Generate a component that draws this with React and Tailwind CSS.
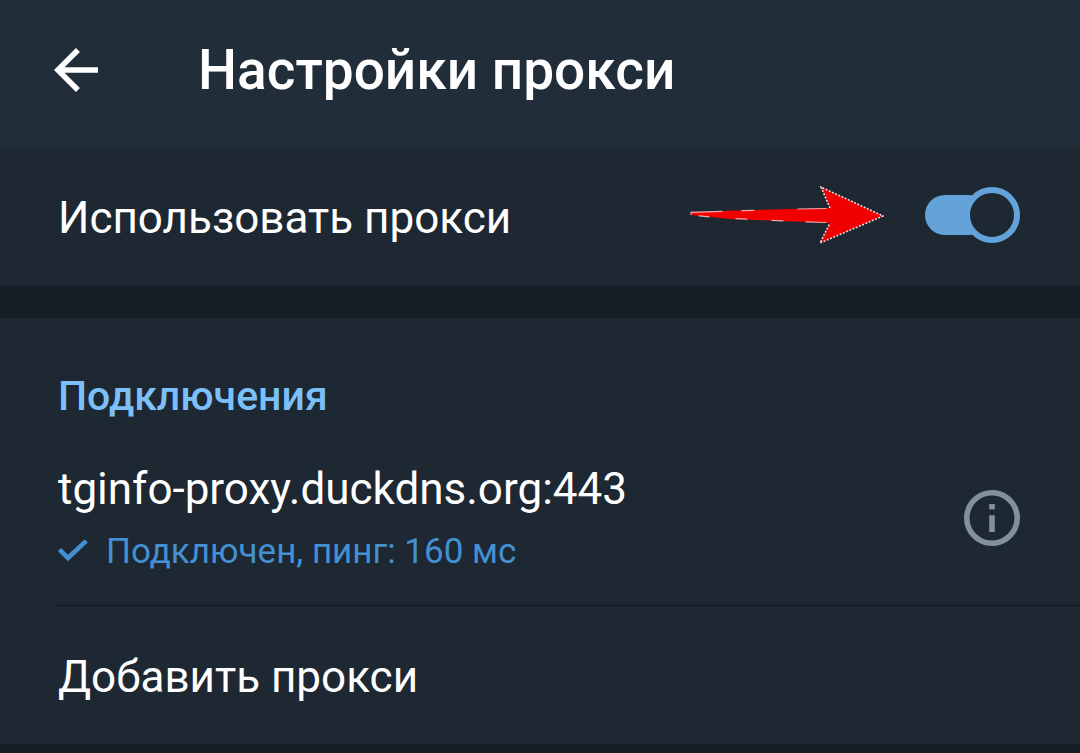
import React, { useState } from 'react';

const BackIcon = () => (
  <svg viewBox="4 4 16 16" className="w-11 h-11" fill="currentColor" aria-hidden="true">
    <path d="M20 11H7.83l5.59-5.59L12 4l-8 8 8 8 1.41-1.41L7.83 13H20v-2z" />
  </svg>
);

const InfoIcon = () => (
  <svg viewBox="2 2 20 20" className="w-14 h-14" fill="currentColor" aria-hidden="true">
    <path d="M11 7h2v2h-2V7zm0 4h2v6h-2v-6zm1-9C6.48 2 2 6.48 2 12s4.48 10 10 10 10-4.48 10-10S17.52 2 12 2zm0 18c-4.41 0-8-3.59-8-8s3.59-8 8-8 8 3.59 8 8-3.59 8-8 8z" />
  </svg>
);

const CheckIcon = () => (
  <svg viewBox="0 0 30 24" className="w-[30px] h-6 shrink-0" fill="none" stroke="currentColor" strokeWidth="4.6" aria-hidden="true">
    <path d="M1.5 9.6 L10 18 L28.3 0.8" />
  </svg>
);

// red pointer with a dotted white edge on the head
const RedArrow = () => (
  <svg viewBox="0 0 194 58" className="w-[194px] h-[58px] shrink-0" aria-hidden="true">
    <path d="M1 26 L60 24 L140 22 L131 1 L193 30 L130 57 L140 37 L90 35 L40 33 L1 29 Z" fill="#f00000" />
    <g fill="none" stroke="#f6c4c6" strokeWidth="1.2" strokeLinecap="round" opacity="0.85">
      <path d="M1 28.5 V26.3 L32 25.4 M52 24.6 L64 24.3 M108 23 L136 22.5" />
      <path d="M9 29.8 L19 30.8 M46 32.6 L57 33.2 M82 34.4 L93 34.8 M116 35.8 L136 36.5" />
    </g>
    <path d="M140 22 L131 1 L193 30 L130 57 L140 37" fill="none" stroke="#e9dcdf" strokeWidth="1.6" strokeDasharray="1.9 1.6" />
  </svg>
);

const App = () => {
  const [useProxy, setUseProxy] = useState(true);

  return (
    <div className="min-h-screen bg-[#171e26] text-white font-['Roboto','Noto_Sans',sans-serif]">
      <header className="flex items-center bg-[#222d3a] pl-[54px] pr-14 pt-[38px] pb-[45px]">
        <button type="button" aria-label="Назад" className="shrink-0">
          <BackIcon />
        </button>
        <h1 className="ml-[100px] text-[55px] leading-[64px] font-medium">Настройки прокси</h1>
      </header>

      <main>
        <section className="flex items-center bg-[#1e2833] pl-[58px] pr-[60px] pt-[39px] pb-[41px]">
          <label htmlFor="use-proxy" className="flex-1 pt-1.5 text-[44px] leading-[52px]">
            Использовать прокси
          </label>
          <RedArrow />
          <input
            id="use-proxy"
            type="checkbox"
            checked={useProxy}
            onChange={(e) => setUseProxy(e.target.checked)}
            className="appearance-none relative ml-10 w-24 h-14 shrink-0 cursor-pointer before:absolute before:left-px before:top-2 before:w-16 before:h-10 before:rounded-full before:bg-[#7b8896] checked:before:bg-[#64a3d9] after:absolute after:left-0 after:top-0 after:w-14 after:h-14 after:rounded-full after:border-6 after:border-[#7b8896] after:bg-[#1e2833] checked:after:left-10 checked:after:border-[#64a3d9]"
          />
        </section>

        <section className="mt-[33px] bg-[#1e2833] pt-[54px]">
          <h2 className="pl-[58px] text-[41px] leading-[48px] font-medium text-[#7cc0fa]">Подключения</h2>

          <div className="ml-[54px] mt-[41px] pl-1 pr-[60px] pb-[31px] flex items-center border-b border-[#10161d]">
            <div className="flex-1">
              <p className="text-[44px] leading-[56px]">tginfo-proxy.duckdns.org:443</p>
              <p className="mt-[13px] flex items-center gap-[18px] text-[35px] leading-[44px] text-[#4390d2]">
                <CheckIcon />
                <span>Подключен, пинг: 160 мс</span>
              </p>
            </div>
            <button type="button" aria-label="Информация" className="text-[#82909e]">
              <InfoIcon />
            </button>
          </div>

          <button type="button" className="block w-full pl-[58px] pt-11 pb-10 text-left text-[44px] leading-[54px]">
            Добавить прокси
          </button>
        </section>
      </main>
    </div>
  );
};

export default App;
